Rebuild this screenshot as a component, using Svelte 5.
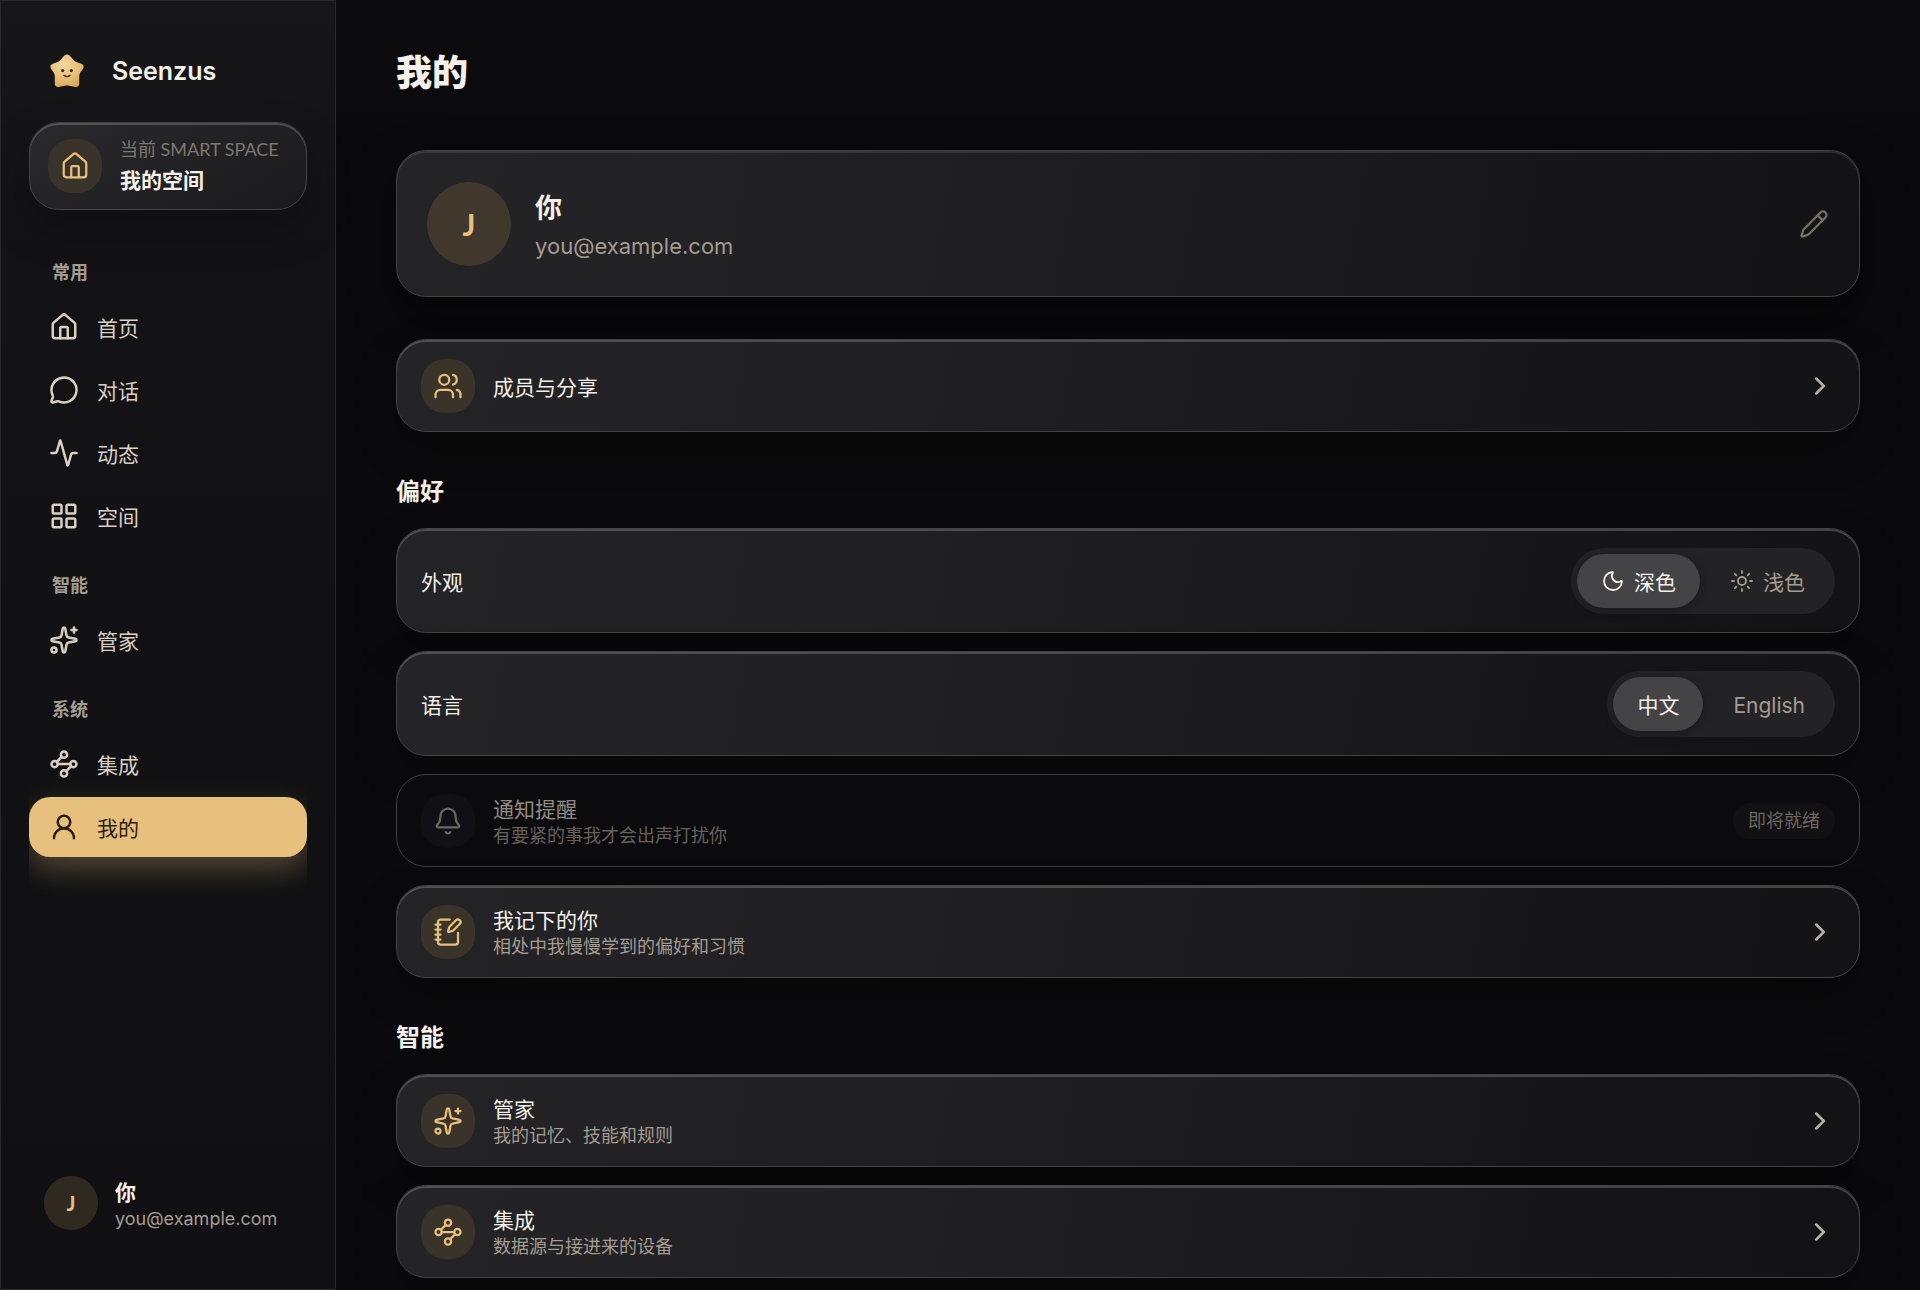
<script lang="ts">
  type Item = { icon: string; label: string };

  const groups: { title: string; items: Item[] }[] = [
    {
      title: '常用',
      items: [
        { icon: 'home', label: '首页' },
        { icon: 'chat', label: '对话' },
        { icon: 'activity', label: '动态' },
        { icon: 'grid', label: '空间' }
      ]
    },
    { title: '智能', items: [{ icon: 'sparkles', label: '管家' }] },
    {
      title: '系统',
      items: [
        { icon: 'nodes', label: '集成' },
        { icon: 'user', label: '我的' }
      ]
    }
  ];

  const smart = [
    { icon: 'sparkles', title: '管家', sub: '我的记忆、技能和规则' },
    { icon: 'nodes', title: '集成', sub: '数据源与接进来的设备' }
  ];

  const user = { name: '你', email: 'you@example.com', initial: 'J' };

  let current = $state('我的');
  let theme = $state('dark');
  let lang = $state('zh');
</script>

{#snippet icon(name, small = false)}
  <svg class="icon" class:small viewBox="0 0 24 24" aria-hidden="true">
    {#if name === 'home'}
      <path d="M15 21v-8a1 1 0 0 0-1-1h-4a1 1 0 0 0-1 1v8" />
      <path d="M3 10a2 2 0 0 1 .709-1.528l7-6a2 2 0 0 1 2.582 0l7 6A2 2 0 0 1 21 10v9a2 2 0 0 1-2 2H5a2 2 0 0 1-2-2z" />
    {:else if name === 'chat'}
      <path d="M2.992 16.342a2 2 0 0 1 .094 1.167l-1.065 3.29a1 1 0 0 0 1.236 1.168l3.413-.998a2 2 0 0 1 1.099.092 10 10 0 1 0-4.777-4.719" />
    {:else if name === 'activity'}
      <path d="M22 12h-2.48a2 2 0 0 0-1.93 1.46l-2.35 8.36a.25.25 0 0 1-.48 0L9.24 2.18a.25.25 0 0 0-.48 0l-2.35 8.36A2 2 0 0 1 4.49 12H2" />
    {:else if name === 'grid'}
      <rect x="3" y="3" width="7" height="7" rx="1" />
      <rect x="14" y="3" width="7" height="7" rx="1" />
      <rect x="14" y="14" width="7" height="7" rx="1" />
      <rect x="3" y="14" width="7" height="7" rx="1" />
    {:else if name === 'sparkles'}
      <path d="M11.017 2.814a1 1 0 0 1 1.966 0l1.051 5.558a2 2 0 0 0 1.594 1.594l5.558 1.051a1 1 0 0 1 0 1.966l-5.558 1.051a2 2 0 0 0-1.594 1.594l-1.051 5.558a1 1 0 0 1-1.966 0l-1.051-5.558a2 2 0 0 0-1.594-1.594l-5.558-1.051a1 1 0 0 1 0-1.966l5.558-1.051a2 2 0 0 0 1.594-1.594z" />
      <path d="M20 2v4M22 4h-4" />
      <circle cx="4" cy="20" r="2" />
    {:else if name === 'nodes'}
      <circle cx="12" cy="4.5" r="2.5" />
      <path d="m10.2 6.3-3.9 3.9" />
      <circle cx="4.5" cy="12" r="2.5" />
      <path d="M7 12h10" />
      <circle cx="19.5" cy="12" r="2.5" />
      <path d="m13.8 17.7 3.9-3.9" />
      <circle cx="12" cy="19.5" r="2.5" />
    {:else if name === 'user'}
      <circle cx="12" cy="8" r="5" />
      <path d="M20 21a8 8 0 0 0-16 0" />
    {:else if name === 'users'}
      <path d="M16 21v-2a4 4 0 0 0-4-4H6a4 4 0 0 0-4 4v2" />
      <circle cx="9" cy="7" r="4" />
      <path d="M22 21v-2a4 4 0 0 0-3-3.87M16 3.128a4 4 0 0 1 0 7.744" />
    {:else if name === 'bell'}
      <path d="M10.268 21a2 2 0 0 0 3.464 0" />
      <path d="M3.262 15.326A1 1 0 0 0 4 17h16a1 1 0 0 0 .74-1.673C19.41 13.956 18 12.499 18 8A6 6 0 0 0 6 8c0 4.499-1.411 5.956-2.738 7.326" />
    {:else if name === 'notebook'}
      <path d="M13.4 2H6a2 2 0 0 0-2 2v16a2 2 0 0 0 2 2h12a2 2 0 0 0 2-2v-7.4" />
      <path d="M2 6h4M2 10h4M2 14h4M2 18h4" />
      <path d="M21.378 5.626a1 1 0 1 0-3.004-3.004l-5.01 5.012a2 2 0 0 0-.506.854l-.837 2.87a.5.5 0 0 0 .62.62l2.87-.837a2 2 0 0 0 .854-.506z" />
    {:else if name === 'pencil'}
      <path d="M21.174 6.812a1 1 0 0 0-3.986-3.987L3.842 16.174a2 2 0 0 0-.5.83l-1.321 4.352a.5.5 0 0 0 .623.622l4.353-1.32a2 2 0 0 0 .83-.497z" />
      <path d="m15 5 4 4" />
    {:else if name === 'chevron'}
      <path d="m9 18 6-6-6-6" />
    {:else if name === 'moon'}
      <path d="M20.985 12.486a9 9 0 1 1-9.473-9.472c.405-.022.617.46.402.803a6 6 0 0 0 8.268 8.268c.344-.215.825-.004.803.401" />
    {:else if name === 'sun'}
      <circle cx="12" cy="12" r="4" />
      <path d="M12 2v2M12 20v2M4.93 4.93l1.41 1.41M17.66 17.66l1.41 1.41M2 12h2M20 12h2M6.34 17.66l-1.41 1.41M19.07 4.93l-1.41 1.41" />
    {/if}
  </svg>
{/snippet}

{#snippet linkRow(name, title, sub = '')}
  <a class="card row" href="#detail">
    <span class="tile">{@render icon(name)}</span>
    <span class="texts">
      <span class="title">{title}</span>
      {#if sub}<span class="sub">{sub}</span>{/if}
    </span>
    <span class="chevron">{@render icon('chevron')}</span>
  </a>
{/snippet}

<div class="app">
  <aside class="sidebar">
    <div class="brand">
      <svg class="logo" viewBox="0 0 34 34" aria-hidden="true">
        <defs>
          <radialGradient id="star" cx="0.4" cy="0.3" r="0.75">
            <stop offset="0" stop-color="#f6d79c" />
            <stop offset="0.6" stop-color="#e8bf79" />
            <stop offset="1" stop-color="#d9a55a" />
          </radialGradient>
        </defs>
        <path
          fill="url(#star)"
          d="M14.2 1.8Q17 -0.8 19.8 1.8L23.6 6Q24.8 7.3 26.400 8L31.800 10Q34.800 11.500 33 14.800L30.200 18.800Q29.200 20.400 29.200 22.400L29.200 30Q28.700 33.200 25.500 32.900L19.300 31.800Q17 31.300 14.700 31.800L8.500 32.900Q5.300 33.200 4.800 30L4.800 22.400Q4.800 20.400 3.800 18.800L1 14.800Q-0.800 11.500 2.200 10L7.600 8Q9.200 7.300 10.400 6Z"
        />
        <circle cx="12.700" cy="16.600" r="1.600" fill="#3a2c16" />
        <circle cx="21.300" cy="16.600" r="1.600" fill="#3a2c16" />
        <path d="M14 21.400Q17 23.800 20 21.400" fill="none" stroke="#3a2c16" stroke-width="1.400" stroke-linecap="round" />
      </svg>
      <span class="brand-name">Seenzus</span>
    </div>

    <button class="card space" type="button">
      <span class="tile">{@render icon('home')}</span>
      <span class="texts">
        <span class="space-label">当前 SMART SPACE</span>
        <span class="space-name">我的空间</span>
      </span>
    </button>

    <nav>
      {#each groups as group}
        <h3>{group.title}</h3>
        <ul>
          {#each group.items as item}
            <li>
              <a
                href="#{item.icon}"
                class:active={current === item.label}
                aria-current={current === item.label ? 'page' : undefined}
                onclick={() => (current = item.label)}
              >
                {@render icon(item.icon)}
                <span>{item.label}</span>
              </a>
            </li>
          {/each}
        </ul>
      {/each}
    </nav>

    <div class="account">
      <span class="avatar">{user.initial}</span>
      <span class="texts">
        <span class="account-name">{user.name}</span>
        <span class="account-email">{user.email}</span>
      </span>
    </div>
  </aside>

  <main>
    <h1>我的</h1>

    <section class="card profile">
      <span class="avatar large">{user.initial}</span>
      <div class="texts">
        <span class="profile-name">{user.name}</span>
        <span class="profile-email">{user.email}</span>
      </div>
      <button class="edit" type="button" aria-label="编辑">{@render icon('pencil')}</button>
    </section>

    {@render linkRow('users', '成员与分享')}

    <section class="group">
      <h2>偏好</h2>
      <div class="card row setting">
        <span class="texts title">外观</span>
        <div class="segment" role="group" aria-label="外观">
          <button type="button" class:on={theme === 'dark'} aria-pressed={theme === 'dark'} onclick={() => (theme = 'dark')}>
            {@render icon('moon', true)}<span>深色</span>
          </button>
          <button type="button" class:on={theme === 'light'} aria-pressed={theme === 'light'} onclick={() => (theme = 'light')}>
            {@render icon('sun', true)}<span>浅色</span>
          </button>
        </div>
      </div>
      <div class="card row setting">
        <span class="texts title">语言</span>
        <div class="segment" role="group" aria-label="语言">
          <button type="button" class:on={lang === 'zh'} aria-pressed={lang === 'zh'} onclick={() => (lang = 'zh')}><span>中文</span></button>
          <button type="button" class:on={lang === 'en'} aria-pressed={lang === 'en'} onclick={() => (lang = 'en')}><span>English</span></button>
        </div>
      </div>
      <div class="card row soon">
        <span class="tile">{@render icon('bell')}</span>
        <span class="texts">
          <span class="title">通知提醒</span>
          <span class="sub">有要紧的事我才会出声打扰你</span>
        </span>
        <span class="badge">即将就绪</span>
      </div>
      {@render linkRow('notebook', '我记下的你', '相处中我慢慢学到的偏好和习惯')}
    </section>

    <section class="group">
      <h2>智能</h2>
      {#each smart as row}
        {@render linkRow(row.icon, row.title, row.sub)}
      {/each}
    </section>
  </main>
</div>

<style>
  :global(body) {
    margin: 0;
    background: #09090b;
  }

  .app {
    --text: #f5f0e8;
    --nav: #d9d0c1;
    --muted: #a39c90;
    --gold: #e8c07d;
    display: flex;
    min-height: 100vh;
    background: linear-gradient(180deg, #0c0c0e 0, #0a0a0c 120px);
    color: var(--text);
    font-family: Inter, "Noto Sans CJK SC", sans-serif;
    font-size: 21px;
    line-height: 26px;
  }

  .app :global(*) {
    box-sizing: border-box;
  }

  h1, h2, h3, ul {
    margin: 0;
    padding: 0;
  }

  ul {
    list-style: none;
  }

  a {
    color: inherit;
    text-decoration: none;
  }

  button {
    font: inherit;
    color: inherit;
    border: 0;
    padding: 0;
    background: none;
    cursor: pointer;
  }

  .icon {
    width: 30px;
    height: 30px;
    flex: none;
    display: block;
    fill: none;
    stroke: currentColor;
    stroke-width: 1.8;
    stroke-linecap: round;
    stroke-linejoin: round;
  }

  .icon.small {
    width: 24px;
    height: 24px;
  }

  .texts {
    display: flex;
    flex-direction: column;
    flex: 1;
    min-width: 0;
    padding-top: 4px;
    text-align: left;
  }

  /* sidebar */
  .sidebar {
    position: sticky;
    top: 0;
    display: flex;
    flex-direction: column;
    flex: none;
    width: 336px;
    height: 100vh;
    padding: 48px 28px 42px;
    border: 1px solid #28282b;
    background: linear-gradient(180deg, #17171a 0, #131315 20%, #101012 100%);
  }

  .brand {
    display: flex;
    align-items: center;
    gap: 28px;
    height: 44px;
    margin-bottom: 29px;
    padding-left: 21px;
  }

  .logo {
    width: 34px;
    height: 34px;
  }

  .brand-name {
    font-size: 25px;
    font-weight: 600;
  }

  .card {
    border: 1px solid #424245;
    border-radius: 30px;
    background: linear-gradient(100deg, #242426 0%, #202022 35%, #171719 75%, #131315 100%);
    box-shadow: inset 0 2px 0 rgba(255, 255, 255, 0.2), 0 18px 42px rgba(0, 0, 0, 0.25);
  }

  .space {
    display: flex;
    align-items: center;
    gap: 18px;
    flex: none;
    height: 88px;
    padding: 0 18px;
    background: linear-gradient(150deg, #2a2a2d, #1a1a1c);
  }

  .tile {
    display: grid;
    place-items: center;
    flex: none;
    width: 54px;
    height: 54px;
    border-radius: 24px;
    background: #393329;
    color: var(--gold);
  }

  .space-label {
    font-family: Lato, "Noto Sans CJK SC", sans-serif;
    font-size: 18px;
    white-space: nowrap;
    color: #7d776e;
  }

  .space-name {
    line-height: 38px;
    font-weight: 700;
  }

  nav {
    flex: 1;
    min-height: 0;
    margin-top: 23px;
    overflow: hidden;
  }

  nav h3 {
    padding: 27px 23px 11px;
    font-size: 18px;
    font-weight: 700;
    color: var(--muted);
  }

  nav ul {
    display: flex;
    flex-direction: column;
    gap: 3px;
  }

  nav a {
    display: flex;
    align-items: center;
    gap: 18px;
    height: 60px;
    padding: 0 20px;
    border-radius: 21px;
    color: var(--nav);
  }

  nav a span {
    padding-top: 3px;
  }

  nav .icon {
    stroke-width: 2;
  }

  nav a.active {
    background: var(--gold);
    color: #2a1f0d;
    box-shadow: 0 12px 30px rgba(232, 192, 125, 0.3);
  }

  .account {
    display: flex;
    align-items: center;
    gap: 17px;
    padding: 15px;
  }

  .account .texts {
    padding-top: 6px;
  }

  .avatar {
    display: grid;
    place-items: center;
    flex: none;
    width: 54px;
    height: 54px;
    border-radius: 50%;
    background: #30291f;
    color: var(--gold);
    font-family: Lato, sans-serif;
    font-weight: 700;
  }

  .account-name {
    font-weight: 700;
  }

  .account-email {
    font-size: 18px;
    color: var(--muted);
  }

  /* content */
  main {
    display: flex;
    flex-direction: column;
    flex: 1;
    min-width: 0;
    padding: 49px 60px 12px;
  }

  h1 {
    margin-bottom: 53px;
    font-size: 36px;
    line-height: 48px;
    font-weight: 800;
  }

  .profile {
    display: flex;
    align-items: center;
    gap: 24px;
    height: 147px;
    margin-bottom: 42px;
    padding: 0 30px;
    box-shadow: inset 0 2px 0 rgba(255, 255, 255, 0.1), 0 18px 42px rgba(0, 0, 0, 0.5);
  }

  .profile .texts {
    padding-top: 9px;
  }

  .avatar.large {
    width: 84px;
    height: 84px;
    background: #41382d;
    font-size: 30px;
  }

  .profile-name {
    font-size: 27px;
    line-height: 36px;
    font-weight: 700;
  }

  .profile-email {
    font-size: 22px;
    line-height: 38px;
    color: var(--muted);
  }

  .edit {
    color: #767168;
  }

  .row {
    display: flex;
    align-items: center;
    gap: 18px;
    min-height: 93px;
    padding: 18px 24px;
  }

  .row.setting {
    min-height: 105px;
  }

  .title {
    color: var(--text);
  }

  .sub {
    font-size: 18px;
    line-height: 25px;
    color: var(--muted);
  }

  .chevron {
    color: #b5aea3;
  }

  .chevron .icon {
    stroke-width: 2;
  }

  .group {
    display: flex;
    flex-direction: column;
    gap: 18px;
    margin-top: 42px;
  }

  h2 {
    font-size: 24px;
    line-height: 36px;
    font-weight: 700;
  }

  .segment {
    display: flex;
    gap: 6px;
    padding: 6px;
    border-radius: 33px;
    background: #232325;
  }

  .segment button {
    display: flex;
    align-items: center;
    gap: 9px;
    height: 54px;
    padding: 0 24px;
    border-radius: 27px;
    color: var(--muted);
  }

  .segment span {
    padding-top: 4px;
  }

  .segment button.on {
    background: #444446;
    color: var(--text);
    box-shadow: 0 3px 12px rgba(0, 0, 0, 0.3);
  }

  .soon {
    border-color: #3f3f40;
    background: #0b0b0d;
    box-shadow: none;
  }

  .soon .tile {
    background: #111115;
    color: #6b665f;
  }

  .soon .title {
    color: #8f8a83;
  }

  .soon .sub {
    color: #65615a;
  }

  .badge {
    padding: 5px 15px;
    border-radius: 18px;
    background: #111113;
    font-size: 18px;
    color: #6b665f;
  }
</style>
